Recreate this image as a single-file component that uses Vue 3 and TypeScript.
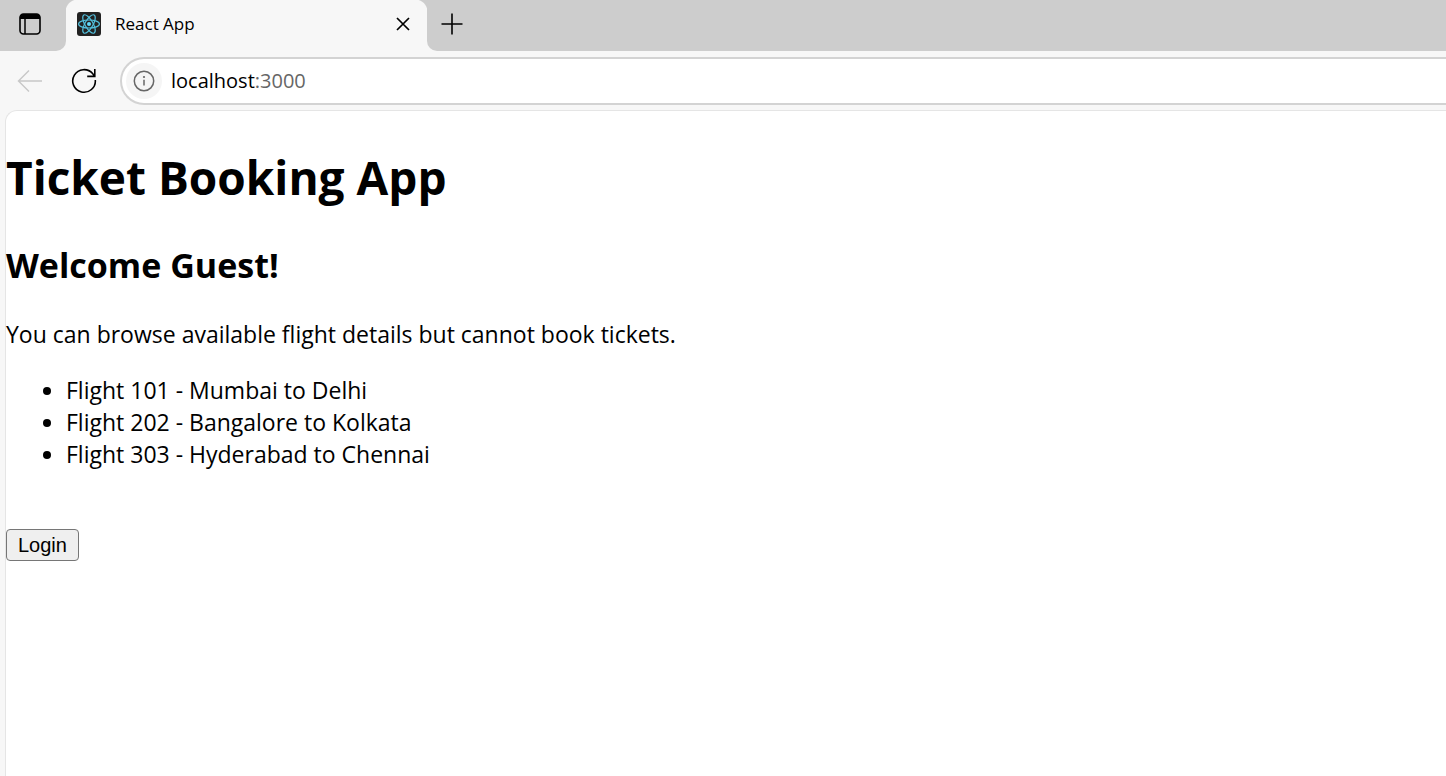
<script setup lang="ts">
import { ref } from 'vue'

interface Flight {
  number: number
  from: string
  to: string
}

const flights = ref<Flight[]>([
  { number: 101, from: 'Mumbai', to: 'Delhi' },
  { number: 202, from: 'Bangalore', to: 'Kolkata' },
  { number: 303, from: 'Hyderabad', to: 'Chennai' },
])
</script>

<template>
  <div class="browser">
    <header class="tabs">
      <div class="strip start">
        <button class="icon-button" type="button" aria-label="Tab actions">
          <svg width="22" height="22" viewBox="0 0 22 22">
            <rect x="1" y="1" width="20" height="20" rx="3.5" fill="none" stroke="#000" stroke-width="1.6" />
            <path d="M1 6V4.5A3.5 3.5 0 0 1 4.500 1h13A3.500 3.500 0 0 1 21 4.500V6z" />
            <path d="M6 6v15" stroke="#000" stroke-width="1.500" />
          </svg>
        </button>
      </div>
      <div class="tab">
        <svg class="favicon" width="24" height="24" viewBox="0 0 24 24">
          <rect width="24" height="24" rx="3" fill="#222" />
          <g fill="none" stroke="#53c1de" stroke-width="1.200">
            <ellipse cx="12" cy="12" rx="10.400" ry="4" />
            <ellipse cx="12" cy="12" rx="10.400" ry="4" transform="rotate(60 12 12)" />
            <ellipse cx="12" cy="12" rx="10.400" ry="4" transform="rotate(120 12 12)" />
          </g>
          <circle cx="12" cy="12" r="2" fill="#61dafb" />
        </svg>
        <span class="tab-title">React App</span>
        <button class="icon-button" type="button" aria-label="Close tab">
          <svg width="14" height="14" viewBox="0 0 14 14">
            <path d="M1 1l12 12M13 1L1 13" fill="none" stroke="#000" stroke-width="1.700" />
          </svg>
        </button>
      </div>
      <div class="strip end">
        <button class="icon-button" type="button" aria-label="New tab">
          <svg width="22" height="22" viewBox="0 0 22 22">
            <path d="M11 .5v21M.5 11h21" fill="none" stroke="#000" stroke-width="1.600" />
          </svg>
        </button>
      </div>
    </header>

    <nav class="toolbar" aria-label="Navigation">
      <button class="icon-button" type="button" aria-label="Back">
        <svg width="26" height="24" viewBox="0 0 26 24">
          <path d="M12 1.500L1.500 12 12 22.500M1.500 12H25" fill="none" stroke="#c8c8c8" stroke-width="1.500" />
        </svg>
      </button>
      <button class="icon-button" type="button" aria-label="Refresh">
        <svg width="26" height="26" viewBox="0 0 26 26">
          <path d="M24.300 12A11.300 11.300 0 1 1 21.600 5.600L23.600 8.400M23.800 1V8.400H16.200" fill="none" stroke="#000" stroke-width="1.600" />
        </svg>
      </button>
      <div class="address">
        <button class="icon-button info" type="button" aria-label="View site information">
          <svg width="22" height="22" viewBox="0 0 22 22">
            <circle cx="11" cy="11" r="9.700" fill="none" stroke="#666" stroke-width="1.500" />
            <circle cx="11" cy="7" r="1.100" fill="#666" />
            <path d="M11 9.700v5.800" stroke="#666" stroke-width="1.500" />
          </svg>
        </button>
        <a class="url" href="#">localhost<span class="port">:3000</span></a>
      </div>
    </nav>

    <main class="page">
      <h1>Ticket Booking App</h1>
      <h2>Welcome Guest!</h2>
      <p>You can browse available flight details but cannot book tickets.</p>
      <ul>
        <li v-for="flight in flights" :key="flight.number">
          Flight {{ flight.number }} - {{ flight.from }} to {{ flight.to }}
        </li>
      </ul>
      <button class="login" type="button">Login</button>
    </main>
  </div>
</template>

<style>
body {
  background: #f7f7f7;
}
</style>

<style scoped>
.browser {
  display: flex;
  flex-direction: column;
  min-height: 100vh;
  background: #f7f7f7;
  color: #000;
  font-family: "Segoe UI", "Open Sans", "Noto Sans", sans-serif;
}

.icon-button {
  display: flex;
  align-items: center;
  justify-content: center;
  padding: 0;
  border: 0;
  background: none;
}

.tabs {
  display: flex;
  height: 51px;
}

.strip {
  display: flex;
  align-items: center;
  padding-bottom: 4px;
  background: #cdcdcd;
}

.start {
  box-sizing: border-box;
  width: 66px;
  padding-left: 19px;
  border-bottom-right-radius: 10px;
}

.end {
  flex: 1;
  padding-left: 14px;
  border-bottom-left-radius: 10px;
}

.tab {
  display: flex;
  box-sizing: border-box;
  align-items: center;
  width: 361px;
  padding: 0 17px 3px 11px;
  background: radial-gradient(circle at 12px 12px, #f7f7f7 12px, #cdcdcd 13px) left top / 12px 12px no-repeat,
    radial-gradient(circle at 0 12px, #f7f7f7 12px, #cdcdcd 13px) right top / 12px 12px no-repeat,
    #f7f7f7;
}

.tab-title {
  flex: 1;
  margin-left: 14px;
  font-size: 17px;
  line-height: 24px;
}

.toolbar {
  display: flex;
  align-items: center;
  height: 60px;
  margin-bottom: -1px;
  padding-left: 17px;
  gap: 28px;
}

.address {
  display: flex;
  flex: 1;
  align-items: center;
  box-sizing: border-box;
  height: 48px;
  margin-left: -5px;
  padding-left: 4px;
  border: 2px solid #d3d3d3;
  border-right: 0;
  border-radius: 24px 0 0 24px;
  background: #fff;
}

.info {
  width: 36px;
  height: 36px;
  border-radius: 50%;
  background: #f5f5f5;
}

.url {
  margin-left: 9px;
  color: #000;
  font-size: 20px;
  line-height: 28px;
  text-decoration: none;
}

.port {
  color: #666;
}

.page {
  flex: 1;
  box-sizing: border-box;
  margin-left: 5px;
  padding-top: 34px;
  border: 1px solid #e5e5e5;
  border-width: 1px 0 0 1px;
  border-top-left-radius: 12px;
  background: #fff;
  font-size: 23px;
  line-height: 32px;
}

h1 {
  margin: 0 0 32px;
  font-size: 46px;
  line-height: 64px;
}

h2 {
  margin: 0 0 29px;
  font-size: 34px;
  line-height: 48px;
}

p {
  margin: 0 0 24px;
}

ul {
  margin: 0 0 59px;
  padding-left: 60px;
}

.login {
  display: block;
  height: 32px;
  padding: 0 11px;
  border: 1px solid #767676;
  border-radius: 4px;
  background: #efefef;
  color: #000;
  font-family: "Liberation Sans", Arial, sans-serif;
  font-size: 20px;
  line-height: 28px;
}
</style>
